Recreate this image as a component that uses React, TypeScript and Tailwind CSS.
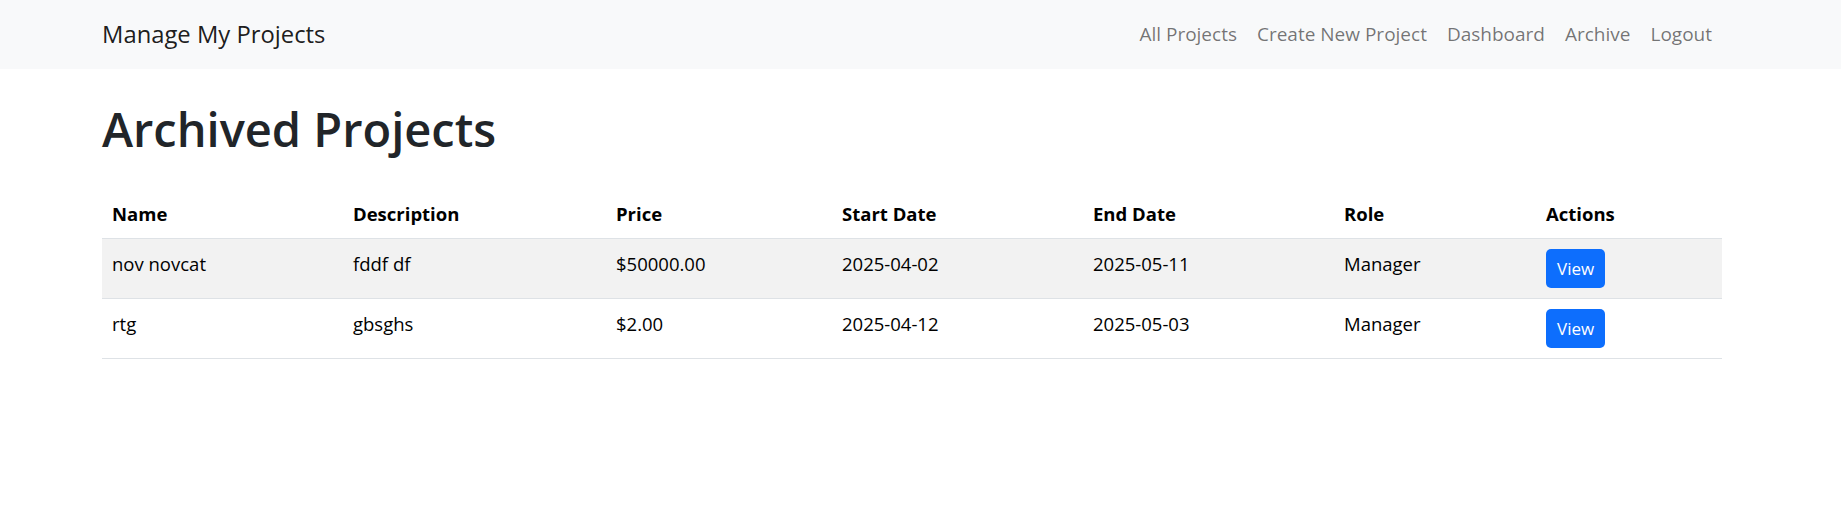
import React from "react";

const projects = [
  { name: "nov novcat", description: "fddf df", price: "$50000.00", start: "2025-04-02", end: "2025-05-11", role: "Manager" },
  { name: "rtg", description: "gbsghs", price: "$2.00", start: "2025-04-12", end: "2025-05-03", role: "Manager" },
];

const navLinks = ["All Projects", "Create New Project", "Dashboard", "Archive", "Logout"];

export default function App() {
  return (
    <div className="min-h-[531px] bg-white font-['Open_Sans',sans-serif] text-[#212529]">
      {/* navbar */}
      <nav className="h-[69px] bg-[#f8f9fa]">
        <div className="flex h-full items-center justify-between pl-[102px] pr-[119px]">
          <span className="text-[23.8px] text-black/90 leading-none">Manage My Projects</span>
          <ul className="flex items-center">
            {navLinks.map((link) => (
              <li key={link} className="px-[10px] text-[19px] leading-none text-black/55">
                {link}
              </li>
            ))}
          </ul>
        </div>
      </nav>

      <div className="pl-[102px] pr-[119px]">
        <h1 className="mt-[30px] mb-[30px] text-[47px] font-semibold leading-[60px] text-[#212529]">
          Archived Projects
        </h1>

        <table className="w-[1620px] border-collapse text-[18.5px] text-black">
          <thead>
            <tr className="border-b border-[#dee2e6] text-left align-bottom">
              <th className="w-[241px] px-[10px] py-[10px] font-bold leading-[29px]">Name</th>
              <th className="w-[263px] px-[10px] py-[10px] font-bold leading-[29px]">Description</th>
              <th className="w-[226px] px-[10px] py-[10px] font-bold leading-[29px]">Price</th>
              <th className="w-[251px] px-[10px] py-[10px] font-bold leading-[29px]">Start Date</th>
              <th className="w-[251px] px-[10px] py-[10px] font-bold leading-[29px]">End Date</th>
              <th className="w-[202px] px-[10px] py-[10px] font-bold leading-[29px]">Role</th>
              <th className="w-[186px] px-[10px] py-[10px] font-bold leading-[29px]">Actions</th>
            </tr>
          </thead>
          <tbody>
            {projects.map((p, i) => (
              <tr key={p.name} className={`border-b border-[#dee2e6] align-top ${i % 2 === 0 ? "bg-[#f2f2f2]" : "bg-white"}`}>
                <td className="px-[10px] py-[10px] leading-[30px]">{p.name}</td>
                <td className="px-[10px] py-[10px] leading-[30px]">{p.description}</td>
                <td className="px-[10px] py-[10px] leading-[30px]">{p.price}</td>
                <td className="px-[10px] py-[10px] leading-[30px]">{p.start}</td>
                <td className="px-[10px] py-[10px] leading-[30px]">{p.end}</td>
                <td className="px-[10px] py-[10px] leading-[30px]">{p.role}</td>
                <td className="px-[10px] py-[10px]">
                  <button className="block h-[39px] rounded-[5px] bg-[#0d6efd] px-[11px] text-[17px] leading-none text-white">
                    View
                  </button>
                </td>
              </tr>
            ))}
          </tbody>
        </table>
      </div>
    </div>
  );
}
